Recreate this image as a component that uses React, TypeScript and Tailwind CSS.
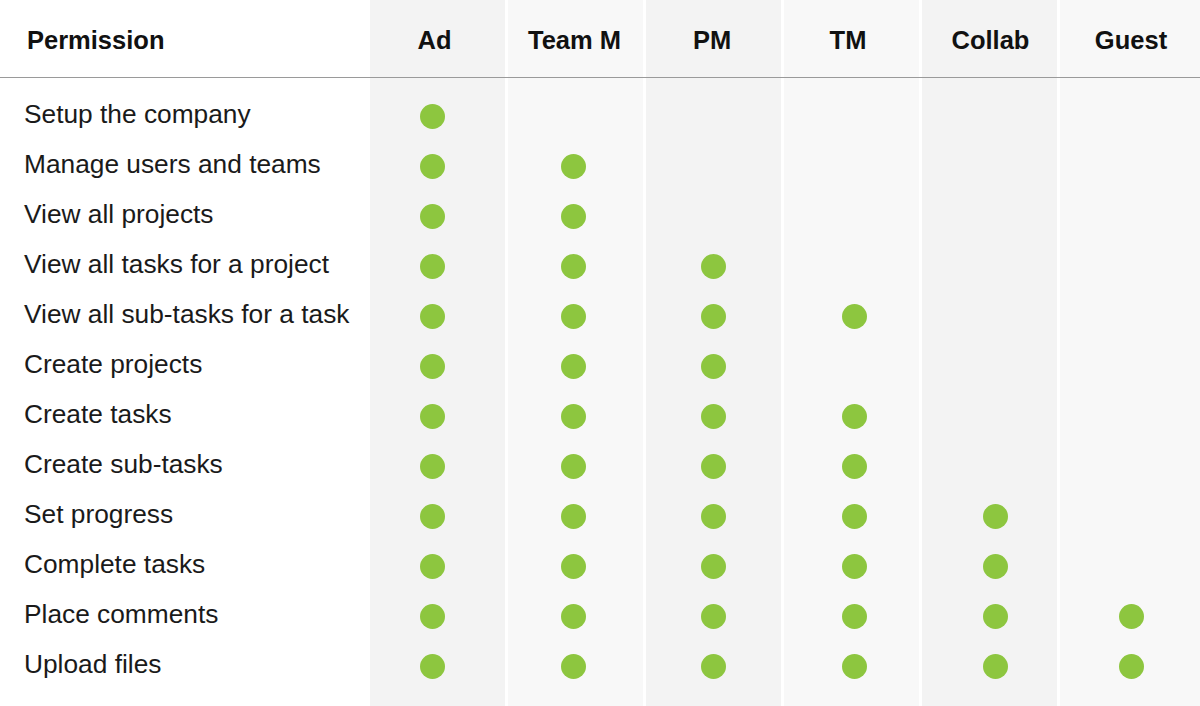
import React from 'react';

const roles = [
    { name: 'Ad', bg: 'bg-[#f3f3f3]', dot: 'ml-[50px]', head: 'pr-[6px]' },
    { name: 'Team M', bg: 'bg-[#f8f8f8]', dot: 'ml-[53px]', head: 'pr-[2px]' },
    { name: 'PM', bg: 'bg-[#f3f3f3]', dot: 'ml-[55px]', head: 'pr-[3px]' },
    { name: 'TM', bg: 'bg-[#f8f8f8]', dot: 'ml-[58px]', head: 'pr-[7px]' },
    { name: 'Collab', bg: 'bg-[#f3f3f3]', dot: 'ml-[61px]', head: 'pl-[2px]' },
    { name: 'Guest', bg: 'bg-[#f8f8f8]', dot: 'ml-[59px]', head: 'pl-[2px]' },
];

// indexes of the roles that hold each permission
const permissions: [string, number[]][] = [
    ['Setup the company', [0]],
    ['Manage users and teams', [0, 1]],
    ['View all projects', [0, 1]],
    ['View all tasks for a project', [0, 1, 2]],
    ['View all sub-tasks for a task', [0, 1, 2, 3]],
    ['Create projects', [0, 1, 2]],
    ['Create tasks', [0, 1, 2, 3]],
    ['Create sub-tasks', [0, 1, 2, 3]],
    ['Set progress', [0, 1, 2, 3, 4]],
    ['Complete tasks', [0, 1, 2, 3, 4]],
    ['Place comments', [0, 1, 2, 3, 4, 5]],
    ['Upload files', [0, 1, 2, 3, 4, 5]],
];

function Dot({ className }: { className: string }) {
    return <span className={`block h-[25px] w-[25px] rounded-full bg-[#8dc63f] ${className}`} />;
}

export default function App() {
    return (
        <div
            className="relative h-[706px] w-[1200px] overflow-hidden bg-white text-[#1a1a1a]"
            style={{ fontFamily: '"Liberation Sans", Arial, sans-serif' }}
        >
            {/* column stripes + content share one grid */}
            <div className="grid h-full grid-cols-[367px_135px_135px_135px_135px_135px_1fr] gap-x-[3px]">
                <div className="flex flex-col">
                    <div className="flex h-[77px] items-center pl-[27px] pt-[4px] text-[25.5px] font-bold text-[#111]">
                        Permission
                    </div>
                    <div className="h-px bg-[#9a9a9a]" />
                    <div className="pt-[13px]">
                        {permissions.map(([label]) => (
                            <div key={label} className="flex h-[50px] items-center pl-[24px] text-[26.3px] leading-none">
                                <span className="-mt-[3px]">{label}</span>
                            </div>
                        ))}
                    </div>
                </div>
                {roles.map((role, i) => (
                    <div key={role.name} className={`relative flex flex-col ${role.bg}`}>
                        <div className={`flex h-[77px] items-center justify-center pt-[4px] text-[25.5px] font-bold text-[#111] ${role.head}`}>
                            {role.name}
                        </div>
                        <div className="h-px bg-[#9a9a9a]" />
                        <div className="pt-[13px]">
                            {permissions.map(([label, who]) => (
                                <div key={label} className="flex h-[50px] items-center">
                                    {who.includes(i) && <Dot className={role.dot} />}
                                </div>
                            ))}
                        </div>
                    </div>
                ))}
            </div>
            {/* the rule runs through the white gaps too */}
            <div className="pointer-events-none absolute left-0 right-0 top-[77px] h-px bg-[#9a9a9a]" />
        </div>
    );
}
